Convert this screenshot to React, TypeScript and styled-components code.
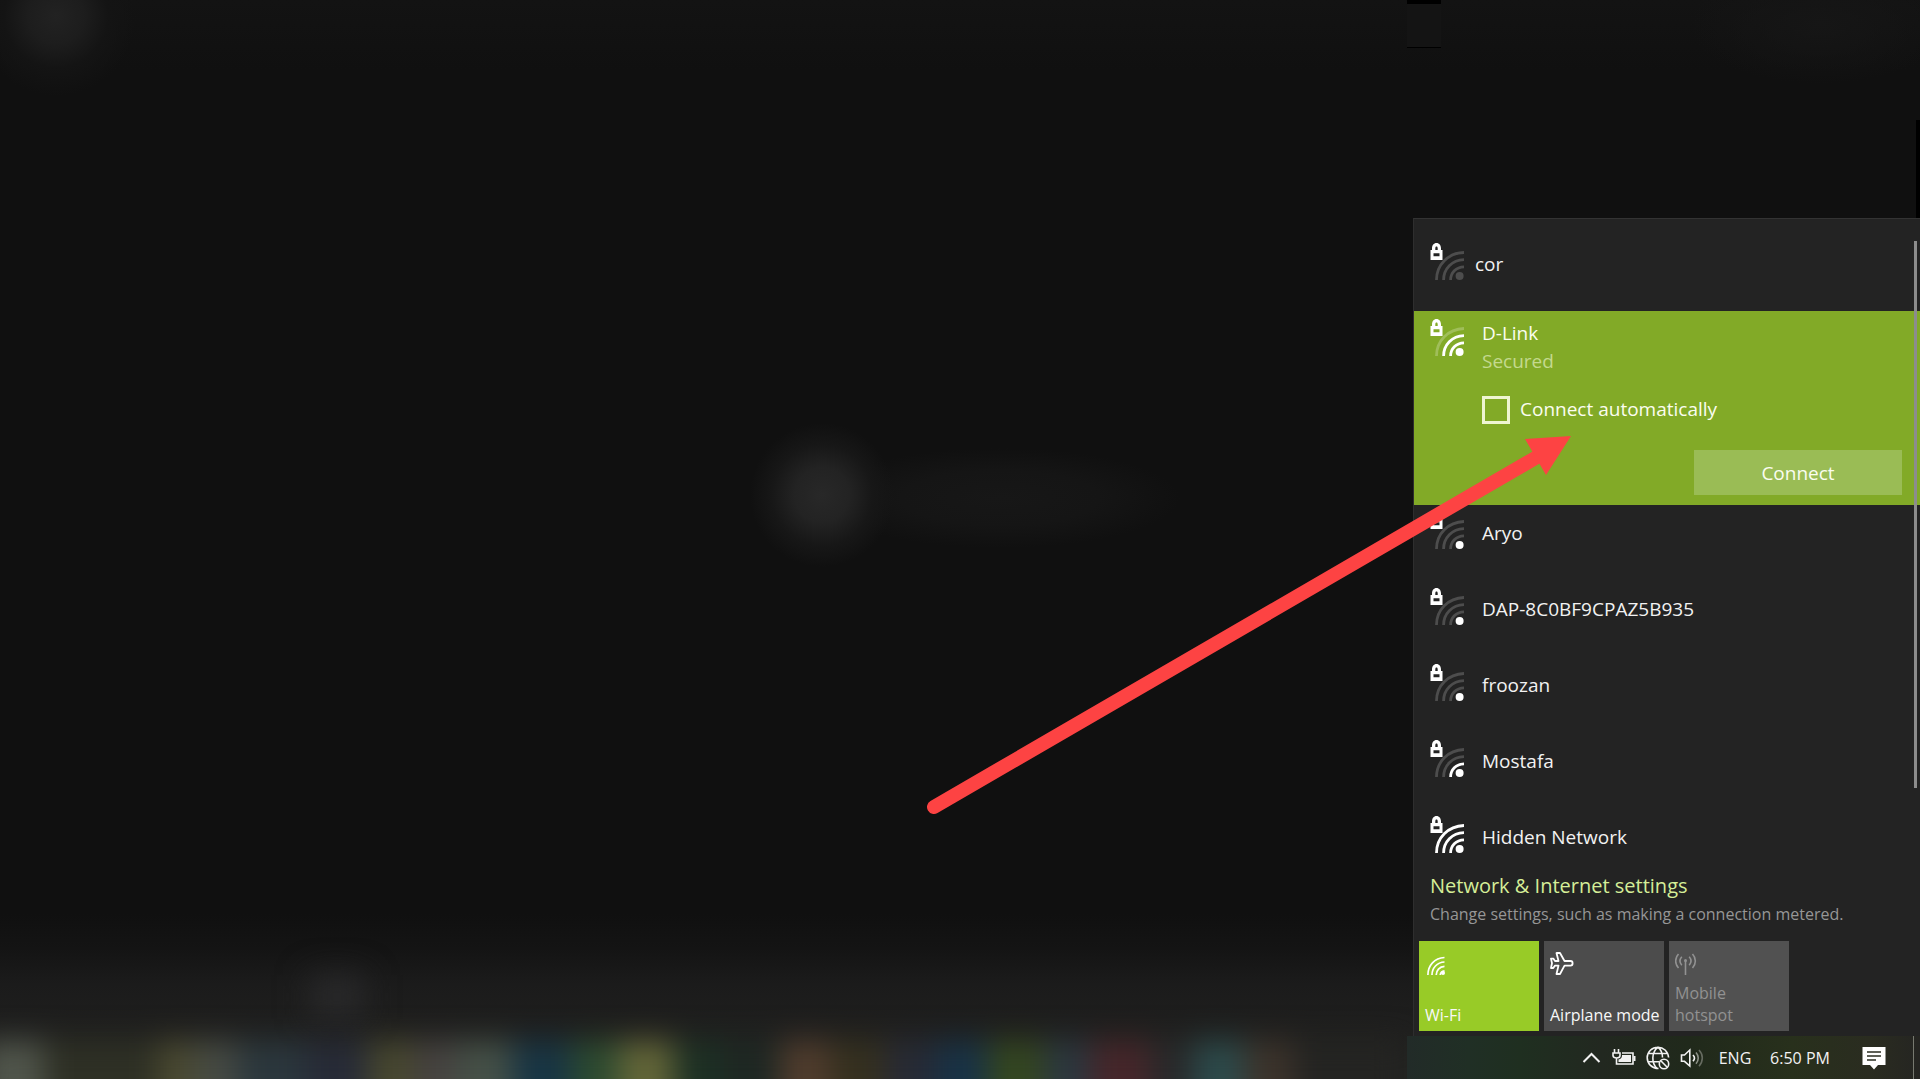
import React from "react";
import styled, { createGlobalStyle } from "styled-components";

const GlobalStyle = createGlobalStyle`
  *, *::before, *::after { box-sizing: border-box; }
  body {
    margin: 0;
    background: #101010;
    color: #f2f2f2;
    font-family: "Open Sans", "Noto Sans", sans-serif;
  }
  button, input { font: inherit; color: inherit; margin: 0; }
`;

const Desktop = styled.main`
  position: relative;
  min-height: 100vh;
  display: flex;
  flex-direction: column;
  justify-content: flex-end;
  align-items: flex-end;
  overflow: hidden;
`;

/* ---------- blurred wallpaper ---------- */

const Wallpaper = styled.div`
  position: absolute;
  inset: 0;
  overflow: hidden;
  background:
    radial-gradient(circle 80px at 56px 16px, #222222 0%, #1d1d1d 35%, #141414 65%, rgba(16, 16, 16, 0) 100%),
    radial-gradient(circle 72px at 822px 495px, #282828 0%, #232323 38%, #171717 70%, rgba(16, 16, 16, 0) 100%),
    radial-gradient(ellipse 180px 50px at 1000px 498px, #171717 0%, #151515 55%, rgba(16, 16, 16, 0) 100%),
    radial-gradient(ellipse 130px 60px at 1820px 24px, #161616 0%, rgba(16, 16, 16, 0) 100%),
    linear-gradient(to bottom, #131313 0, #101010 70px, #101010 calc(100% - 165px), #141414 calc(100% - 130px), #1b1b1b calc(100% - 95px), #1f1f1e calc(100% - 50px), #222320 100%);
`;

const BlurStrip = styled.div`
  position: absolute;
  left: -20px;
  bottom: -50px;
  display: flex;
  height: 88px;
  filter: blur(15px);
`;

const Swatch = styled.span<{ $width: number; $color: string }>`
  width: ${(p) => p.$width}px;
  background: ${(p) => p.$color};
`;

const BlurIcon = styled.span`
  position: absolute;
  left: 310px;
  bottom: 60px;
  width: 54px;
  height: 44px;
  background: #29292a;
  filter: blur(16px);
`;

const Stub = styled.span`
  position: absolute;
  top: 0;
  right: 479px;
  width: 34px;
  height: 48px;
  background: #141414;
  border-top: 4px solid #000;
  border-bottom: 1px solid #000;
`;

const EdgeShade = styled.span`
  position: absolute;
  top: 120px;
  right: 0;
  width: 4px;
  height: 98px;
  background: #000;
`;

/* ---------- flyout ---------- */

const Flyout = styled.section`
  position: relative;
  width: 507px;
  background: #232323;
  border-top: 1px solid #333;
  border-left: 1px solid #2e2e2e;
`;

const NetworkList = styled.ul`
  position: relative;
  list-style: none;
  margin: 0;
  padding: 0;
`;

const Network = styled.li<{ $top: number; $bottom: number; $gap: number }>`
  display: flex;
  align-items: flex-end;
  gap: ${(p) => p.$gap}px;
  padding: ${(p) => p.$top}px 18px ${(p) => p.$bottom}px 16px;
`;

const NetworkName = styled.span`
  padding-bottom: 2px;
  font-size: 19px;
  line-height: 27px;
`;

const SelectedNetwork = styled.li`
  display: flex;
  gap: 18px;
  padding: 8px 18px 10px 16px;
  background: #82aa27;
  color: #fbfdf0;
`;

const Details = styled.div`
  flex: 1;
  display: flex;
  flex-direction: column;
  font-size: 19px;
  line-height: 28px;
`;

const Status = styled.span`
  color: #c4d98f;
`;

const AutoRow = styled.label`
  display: flex;
  align-items: flex-start;
  gap: 10px;
  margin-top: 21px;
  line-height: 26px;
`;

const CheckBox = styled.input`
  appearance: none;
  width: 28px;
  height: 28px;
  border: 3px solid #eef5d2;
  background: transparent;
`;

const ConnectButton = styled.button`
  align-self: flex-end;
  width: 208px;
  height: 45px;
  margin-top: 26px;
  border: 0;
  background: #9abc55;
`;

const ScrollThumb = styled.span`
  position: absolute;
  top: 22px;
  right: 3px;
  bottom: 75px;
  width: 3px;
  background: #8c8c8c;
`;

const Settings = styled.div`
  display: flex;
  flex-direction: column;
  align-items: flex-start;
  padding: 8px 17px 14px 16px;
`;

const SettingsLink = styled.a`
  color: #d5ee98;
  font-size: 20px;
  line-height: 30px;
  text-decoration: none;
`;

const SettingsHint = styled.span`
  color: #969696;
  font-size: 16px;
  line-height: 26px;
`;

const Tiles = styled.div`
  display: flex;
  gap: 5px;
  padding: 0 5px 5px;
`;

const Tile = styled.button<{ $tone: "on" | "off" | "disabled" }>`
  display: flex;
  flex-direction: column;
  justify-content: space-between;
  align-items: flex-start;
  width: 120px;
  height: 90px;
  padding: 10px 0 5px 6px;
  border: 0;
  text-align: left;
  font-size: 16px;
  line-height: 22px;
  background: ${(p) => (p.$tone === "on" ? "#98cb27" : p.$tone === "off" ? "#4c4c4c" : "#515151")};
  color: ${(p) => (p.$tone === "disabled" ? "#929292" : "#f8f8f8")};
`;

/* ---------- taskbar ---------- */

const Taskbar = styled.footer`
  position: relative;
  display: flex;
  justify-content: flex-end;
  width: 513px;
  height: 43px;
  background: linear-gradient(to right, #222b28 0%, #202f25 12%, #1f2f20 22%, #222820 38%, #20291b 55%, #28301c 75%, #2a2c20 90%, #252522 100%);
`;

const TrayIcons = styled.div`
  display: flex;
  align-items: center;
  gap: 10px;
`;

const TrayButton = styled.button<{ $width?: number }>`
  display: flex;
  align-items: center;
  justify-content: center;
  width: ${(p) => (p.$width ? p.$width + "px" : "auto")};
  padding: 0;
  border: 0;
  background: transparent;
  font-size: 16px;
  line-height: 22px;
  white-space: nowrap;
`;

const ShowDesktop = styled.button`
  width: 7px;
  padding: 0;
  border: 0;
  border-left: 1px solid #777970;
  background: transparent;
`;

const Arrow = styled.svg`
  position: absolute;
  right: 345px;
  bottom: 259px;
  pointer-events: none;
`;

/* ---------- icons ---------- */

function LockedWifi({ level, dim }: { level: number; dim: string }) {
  const tone = (n: number) => (level >= n ? "#fff" : dim);
  return (
    <svg width="34" height="37" viewBox="0 0 34 37" fill="none" aria-hidden="true">
      <path d="M6.5 37C6.5 22 18 10 34 9.5" stroke={tone(4)} strokeWidth="2.8" />
      <path d="M13.6 37C13.6 26 22 17 34 16.6" stroke={tone(3)} strokeWidth="2.8" />
      <path d="M20.6 37C20.6 30 26 24 34 23.8" stroke={tone(2)} strokeWidth="2.8" />
      <circle cx="29.6" cy="33" r="4" fill={tone(1)} />
      <path
        d="M.5 7H2V5.5C2 2.3 3.8 0 6.5 0S11 2.3 11 5.5V7h1.500V17H.5ZM5.300 7h2.400V5.500C7.700 4 7.300 3.400 6.500 3.400S5.300 4 5.300 5.500ZM3.500 10.300v3h6V10.300Z"
        fill="#fff"
        fillRule="evenodd"
      />
    </svg>
  );
}

const WifiIcon = () => (
  <svg width="22" height="26" viewBox="0 0 22 26" fill="none" stroke="#fff" strokeWidth="1.700" aria-hidden="true">
    <path d="M2.900 24C2.900 14.500 9.500 7 19.500 6.500M7 24C7 17 12 11.300 19.500 11M11.200 24C11.200 19.500 14.500 15.600 19.500 15.400M15.200 24C15.500 21.500 17 20 19.500 19.800" />
    <circle cx="18" cy="22" r="2" fill="#fff" stroke="none" />
  </svg>
);

const PlaneIcon = () => (
  <svg width="24" height="26" viewBox="0 0 24 26" fill="none" stroke="#fff" strokeWidth="1.800" strokeLinejoin="round" aria-hidden="true">
    <path d="M6.500 2H10L14.500 10H20.500C22 10 22.600 11 22.600 12.300S22 14.600 20.500 14.600H14.500L10 23H6.500L8.500 14.600H5L3.300 17H1L2 12.300L1 7.600H3.300L5 10H8.500Z" />
  </svg>
);

const HotspotIcon = () => (
  <svg width="22" height="26" viewBox="0 0 22 26" fill="none" stroke="#929292" strokeWidth="1.600" aria-hidden="true">
    <path d="M3.500 3C-.3 7-.3 13 3.500 17M6.800 5.800C4.600 8.300 4.600 11.700 6.800 14.200M17.500 3C21.300 7 21.300 13 17.500 17M14.200 5.800C16.400 8.300 16.400 11.700 14.200 14.200M10.500 10V24" />
    <circle cx="10.500" cy="9.500" r="1.500" fill="#929292" stroke="none" />
  </svg>
);

const ChevronIcon = () => (
  <svg width="20" height="24" viewBox="0 0 20 24" fill="none" stroke="#f2f2f2" strokeWidth="2" aria-hidden="true">
    <path d="M1.500 16L9.500 8L17.500 16" />
  </svg>
);

const BatteryIcon = () => (
  <svg width="24" height="24" viewBox="0 0 24 24" fill="none" stroke="#f2f2f2" strokeWidth="1.600" aria-hidden="true">
    <path d="M2.500 3V7M6.500 3V7M1 7H8V9.500C8 11 6.500 12 4.500 12S1 11 1 9.500ZM4.500 12V18H21V7H10" />
    <path d="M22.500 10V15" strokeWidth="2" />
    <path d="M10 9H19V16H6.500V13.500C9 13 10 11.500 10 9.500Z" fill="#f2f2f2" stroke="none" />
  </svg>
);

const GlobeIcon = () => (
  <svg width="24" height="24" viewBox="0 0 24 24" fill="none" stroke="#f2f2f2" strokeWidth="1.600" aria-hidden="true">
    <path d="M12.500 22.500C6 22.500 1.200 17.600 1.200 11.700S6 1.200 12 1.200C17.300 1.200 22 5.200 22.600 11.500M11 22.500C5.300 17 5.300 6.500 12 1.200C15 3.800 16.500 7.500 16.500 11.500M2.500 7.500H21.500M2 15.800H13" />
    <circle cx="18" cy="18" r="4.700" />
    <path d="M14.800 14.800L21.200 21.200" />
  </svg>
);

const SpeakerIcon = () => (
  <svg width="24" height="24" viewBox="0 0 24 24" fill="none" stroke="#f2f2f2" strokeWidth="1.600" aria-hidden="true">
    <path d="M1.500 9H4.500L9.800 4V20L4.500 15.300H1.500Z" />
    <path d="M13 9C14.700 10.800 14.700 13.400 13 15.200" />
    <path d="M16 6.500C19 9.800 19 14.400 16 17.700" stroke="#8d9288" />
    <path d="M19 4C23.400 8.600 23.400 15.600 19 20.200" stroke="#666b60" />
  </svg>
);

const MessageIcon = () => (
  <svg width="24" height="24" viewBox="0 0 24 24" aria-hidden="true">
    <path d="M.5 1H23.500V19H16L12 23.500L8 19H.5Z" fill="#fff" />
    <path d="M5 6H19M5 10H19M5 14H14" stroke="#2a2c20" strokeWidth="1.500" />
  </svg>
);

/* ---------- data ---------- */

const swatches: [number, string][] = [
  [64, "#50554b"], [114, "#2e3025"], [36, "#4a4930"], [44, "#464a43"], [66, "#2b373d"], [64, "#272b37"],
  [46, "#47472f"], [42, "#464240"], [56, "#455047"], [60, "#183544"], [46, "#2c4a30"], [56, "#626538"],
  [50, "#1d3024"], [56, "#1e2723"], [50, "#503c2d"], [56, "#35301f"], [50, "#272a35"], [52, "#183246"],
  [56, "#344620"], [46, "#2b373f"], [60, "#46262a"], [44, "#28292a"], [50, "#2c4a4b"], [50, "#3c332b"],
  [110, "#242422"],
];

const networks = [
  { name: "Aryo", level: 1, top: 7, bottom: 20 },
  { name: "DAP-8C0BF9CPAZ5B935", level: 1, top: 19, bottom: 20 },
  { name: "froozan", level: 1, top: 19, bottom: 20 },
  { name: "Mostafa", level: 2, top: 19, bottom: 20 },
  { name: "Hidden Network", level: 4, top: 19, bottom: 10 },
];

export default function App() {
  return (
    <>
      <GlobalStyle />
      <Desktop>
        <Wallpaper aria-hidden="true">
          <BlurIcon />
          <BlurStrip>
            {swatches.map(([width, color], i) => (
              <Swatch key={i} $width={width} $color={color} />
            ))}
          </BlurStrip>
          <Stub />
          <EdgeShade />
        </Wallpaper>

        <Flyout aria-label="Networks">
          <NetworkList>
            <Network $top={24} $bottom={31} $gap={11}>
              <LockedWifi level={0} dim="#4d4d4d" />
              <NetworkName>cor</NetworkName>
            </Network>
            <SelectedNetwork>
              <LockedWifi level={3} dim="#a0be5a" />
              <Details>
                <span>D-Link</span>
                <Status>Secured</Status>
                <AutoRow htmlFor="auto-connect">
                  <CheckBox id="auto-connect" type="checkbox" />
                  Connect automatically
                </AutoRow>
                <ConnectButton type="button">Connect</ConnectButton>
              </Details>
            </SelectedNetwork>
            {networks.map((n) => (
              <Network key={n.name} $top={n.top} $bottom={n.bottom} $gap={18}>
                <LockedWifi level={n.level} dim="#4d4d4d" />
                <NetworkName>{n.name}</NetworkName>
              </Network>
            ))}
            <ScrollThumb />
          </NetworkList>
          <Settings>
            <SettingsLink href="#settings">Network &amp; Internet settings</SettingsLink>
            <SettingsHint>Change settings, such as making a connection metered.</SettingsHint>
          </Settings>
          <Tiles>
            <Tile type="button" $tone="on">
              <WifiIcon />
              Wi-Fi
            </Tile>
            <Tile type="button" $tone="off">
              <PlaneIcon />
              Airplane mode
            </Tile>
            <Tile type="button" $tone="disabled" disabled>
              <HotspotIcon />
              <span>Mobile<br />hotspot</span>
            </Tile>
          </Tiles>
        </Flyout>

        <Taskbar>
          <TrayIcons>
            <TrayButton type="button" aria-label="Show hidden icons"><ChevronIcon /></TrayButton>
            <TrayButton type="button" aria-label="Battery"><BatteryIcon /></TrayButton>
            <TrayButton type="button" aria-label="Network"><GlobeIcon /></TrayButton>
            <TrayButton type="button" aria-label="Volume"><SpeakerIcon /></TrayButton>
          </TrayIcons>
          <TrayButton type="button" $width={62}>ENG</TrayButton>
          <TrayButton type="button" $width={68}>6:50 PM</TrayButton>
          <TrayButton type="button" $width={79} aria-label="Notifications"><MessageIcon /></TrayButton>
          <ShowDesktop type="button" aria-label="Show desktop" />
        </Taskbar>

        <Arrow width="650" height="390" viewBox="0 0 650 390" aria-hidden="true">
          <path d="M9 377L612 27" stroke="#fd4343" strokeWidth="14" strokeLinecap="round" />
          <path d="M646 6L600 9L621 45Z" fill="#fd4343" />
        </Arrow>
      </Desktop>
    </>
  );
}
